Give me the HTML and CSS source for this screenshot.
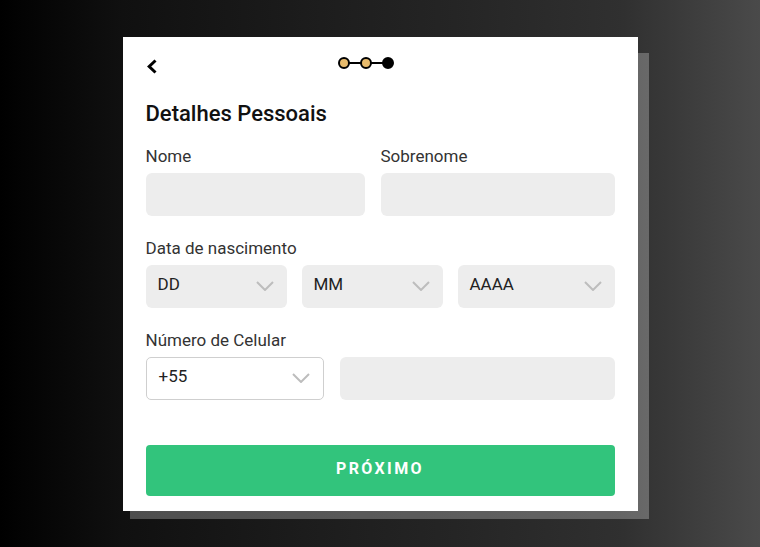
FILE: index.html
```html
<!DOCTYPE html>
<html lang="pt-BR">
<head>
<meta charset="utf-8">
<title>Detalhes Pessoais</title>
<link rel="stylesheet" href="styles.css">
</head>
<body>
<div class="card">
  <div class="header">
    <svg class="back" width="12" height="15" viewBox="0 0 12 15"><polyline points="9.5,1.5 3.2,7.5 9.5,13.5" fill="none" stroke="#000" stroke-width="3"/></svg>
    <svg class="steps" width="56" height="12" viewBox="0 0 56 12">
      <line x1="10" y1="6" x2="24" y2="6" stroke="#000" stroke-width="2"/>
      <line x1="32" y1="6" x2="46" y2="6" stroke="#000" stroke-width="2"/>
      <circle cx="6" cy="6" r="5" fill="#e8bb6c" stroke="#000" stroke-width="2"/>
      <circle cx="28" cy="6" r="5" fill="#e8bb6c" stroke="#000" stroke-width="2"/>
      <circle cx="50" cy="6" r="5" fill="#000" stroke="#000" stroke-width="2"/>
    </svg>
  </div>
  <h1 class="title">Detalhes Pessoais</h1>

  <div class="row row-name">
    <div class="field">
      <div class="label">Nome</div>
      <div class="input"></div>
    </div>
    <div class="field">
      <div class="label">Sobrenome</div>
      <div class="input"></div>
    </div>
  </div>

  <div class="label label-block">Data de nascimento</div>
  <div class="row row-date">
    <div class="select"><span>DD</span><svg class="chev" width="18" height="10" viewBox="0 0 18 10"><polyline points="1,1 9,9 17,1" fill="none" stroke="#bdbdbd" stroke-width="2"/></svg></div>
    <div class="select"><span>MM</span><svg class="chev" width="18" height="10" viewBox="0 0 18 10"><polyline points="1,1 9,9 17,1" fill="none" stroke="#bdbdbd" stroke-width="2"/></svg></div>
    <div class="select"><span>AAAA</span><svg class="chev" width="18" height="10" viewBox="0 0 18 10"><polyline points="1,1 9,9 17,1" fill="none" stroke="#bdbdbd" stroke-width="2"/></svg></div>
  </div>

  <div class="label label-block">Número de Celular</div>
  <div class="row row-phone">
    <div class="select select-outline"><span>+55</span><svg class="chev" width="18" height="10" viewBox="0 0 18 10"><polyline points="1,1 9,9 17,1" fill="none" stroke="#bdbdbd" stroke-width="2"/></svg></div>
    <div class="input"></div>
  </div>

  <button class="next">PRÓXIMO</button>
</div>
</body>
</html>
```
FILE: styles.css
```css
html, body {
  margin: 0;
  padding: 0;
}
body {
  min-height: 547px;
  display: flex;
  align-items: center;
  justify-content: center;
  background: linear-gradient(90deg, #000 0%, #101010 16%, #1c1c1c 40%, #262626 62%, #303030 82%, #4a4a4a 100%);
  font-family: Roboto, "Noto Sans", sans-serif;
}
.card {
  position: relative;
  width: 469px;
  padding: 20px 23px 15px 23px;
  background: #fff;
}
.card::before {
  content: "";
  position: absolute;
  left: 7px;
  top: 16px;
  right: -11px;
  bottom: -8px;
  background: rgba(255, 255, 255, 0.26);
  z-index: -1;
}
.header {
  display: flex;
  align-items: flex-start;
  height: 16px;
}
.back {
  display: block;
  margin-top: 2px;
}
.steps {
  display: block;
  margin-left: 180px;
}
.title {
  margin: 28px 0 0 0;
  font-size: 22px;
  line-height: 26px;
  font-weight: 500;
  color: #111;
}
.row {
  display: grid;
}
.row-name {
  grid-template-columns: 219fr 234fr;
  column-gap: 16px;
  margin-top: 19px;
}
.row-date {
  grid-template-columns: 141fr 141fr 157fr;
  column-gap: 15px;
}
.row-phone {
  grid-template-columns: 178px 1fr;
  column-gap: 16px;
  margin-top: 1px;
}
.label {
  font-size: 17px;
  line-height: 20px;
  color: #333;
  margin-bottom: 7px;
}
.label-block {
  margin-top: 22px;
}
.input {
  height: 43px;
  background: #ededed;
  border-radius: 6px;
}
.select {
  height: 43px;
  box-sizing: border-box;
  background: #ededed;
  border-radius: 6px;
  display: flex;
  align-items: center;
  justify-content: space-between;
  padding: 0 13px 0 12px;
  font-size: 17px;
  color: #222;
}
.select span {
  margin-top: -5px;
}
.select-outline {
  background: #fff;
  border: 1.5px solid #cfcfcf;
  border-radius: 5px;
}
.chev {
  display: block;
}
.next {
  display: block;
  width: 100%;
  height: 51px;
  margin-top: 45px;
  border: 0;
  border-radius: 4px;
  background: #32c47c;
  color: #fff;
  font-family: Roboto, "Noto Sans", sans-serif;
  font-size: 16px;
  font-weight: 700;
  letter-spacing: 2.4px;
  padding: 0 0 4px 0;
}
```
